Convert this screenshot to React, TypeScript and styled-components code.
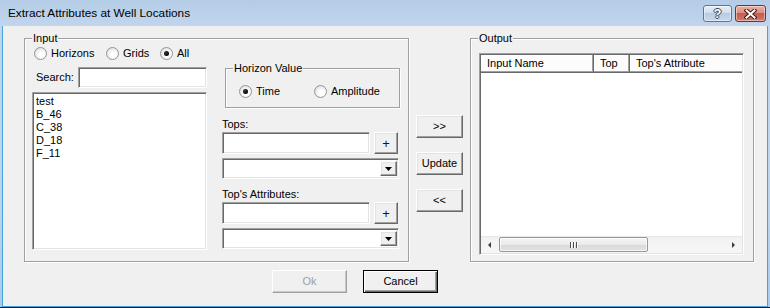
import React from 'react';
import styled, { createGlobalStyle, css } from 'styled-components';

const GlobalStyle = createGlobalStyle`
  html, body { margin: 0; padding: 0; background: #ffffff; }
  body {
    font-family: "Liberation Sans", Arial, sans-serif;
    font-size: 11px;
    color: #000;
  }
  * { box-sizing: border-box; }
`;

const sunken = css`
  border-style: solid;
  border-width: 1px;
  border-color: #a0a0a0 #ffffff #ffffff #a0a0a0;
  box-shadow: inset 1px 1px 0 #696969, inset -1px -1px 0 #e3e3e3;
  background: #ffffff;
`;

const raised = css`
  border-style: solid;
  border-width: 1px;
  border-color: #ffffff #696969 #696969 #ffffff;
  box-shadow: inset -1px -1px 0 #a0a0a0, inset 1px 1px 0 #e3e3e3;
  background: #f0f0f0;
`;

const Window = styled.div`
  width: 770px;
  height: 308px;
  display: flex;
  flex-direction: column;
  background: linear-gradient(#b4cce6, #c1d6ed 26px, #bdd4ec 70%, #a8cbee);
  border-bottom: 1px solid #1b1b1b;
  overflow: hidden;
`;

const TitleBar = styled.div`
  height: 26px;
  flex: none;
  display: flex;
  align-items: flex-start;
  padding: 0 4px 0 8px;
`;

const Title = styled.div`
  font-family: "Liberation Sans", Arial, sans-serif;
  font-size: 11.8px;
  line-height: 26px;
  color: #000;
`;

const Controls = styled.div`
  margin-left: auto;
  margin-top: 5px;
  display: flex;
  gap: 3px;
`;

const CaptionButton = styled.div<{ $close?: boolean }>`
  width: ${(p) => (p.$close ? 31 : 29)}px;
  height: 17px;
  border-radius: 3px;
  display: flex;
  align-items: center;
  justify-content: center;
  border: 1px solid ${(p) => (p.$close ? '#74332c' : '#5f7594')};
  background: ${(p) =>
    p.$close
      ? 'linear-gradient(#eab1a8, #dc8d81 45%, #c85a4d 50%, #d7786a)'
      : 'linear-gradient(#e6eff9, #d0deef 45%, #b7cbe3 50%, #c7d9ee)'};
  box-shadow: inset 0 0 0 1px rgba(255, 255, 255, 0.45);
`;

const HelpGlyph = styled.span`
  font-family: "Liberation Sans", Arial, sans-serif;
  font-weight: bold;
  font-size: 13px;
  line-height: 13px;
  color: #fff;
  text-shadow: 1px 0 #3a4450, -1px 0 #3a4450, 0 1px #3a4450, 0 -1px #3a4450;
`;

const Frame = styled.div`
  flex: 1;
  display: flex;
  padding: 0 2px;
`;

const Client = styled.div`
  flex: 1;
  display: flex;
  flex-direction: column;
  background: #f0f0f0;
  border: 1px solid #46a3d9;
  border-top: none;
  padding: 12px 0 0 21px;
`;

const TopRow = styled.div`
  display: flex;
  align-items: flex-start;
`;

const GroupBox = styled.div<{ $w: number; $h: number }>`
  position: relative;
  flex: none;
  width: ${(p) => p.$w}px;
  height: ${(p) => p.$h}px;
  border: 1px solid #a0a0a0;
  box-shadow: inset 1px 1px 0 #ffffff, 1px 1px 0 #ffffff;
`;

const GroupLabel = styled.span`
  position: absolute;
  top: -7px;
  left: 7px;
  padding: 0 1px;
  line-height: 13px;
  background: #f0f0f0;
`;

const InputBody = styled.div`
  display: flex;
  padding-left: 7px;
`;

const LeftColumn = styled.div`
  width: 175px;
  padding-top: 7px;
  display: flex;
  flex-direction: column;
`;

const RightColumn = styled.div`
  width: 177px;
  margin-left: 15px;
  padding-top: 29px;
  display: flex;
  flex-direction: column;
`;

const RadioRow = styled.div<{ $pad: number }>`
  display: flex;
  align-items: center;
  height: 14px;
  padding-left: ${(p) => p.$pad}px;
`;

const RadioItem = styled.label<{ $w?: number }>`
  display: flex;
  align-items: center;
  gap: 4px;
  line-height: 13px;
  ${(p) => (p.$w ? `width: ${p.$w}px;` : '')}
  flex: none;
`;

const RadioCircle = styled.span<{ $checked?: boolean }>`
  position: relative;
  width: 13px;
  height: 13px;
  flex: none;
  border-radius: 50%;
  border: 1px solid #959595;
  background: radial-gradient(circle at 62% 62%, #ffffff 25%, #ececec 60%, #d2d2d2 100%);
  ${(p) =>
    p.$checked &&
    css`
      &::after {
        content: '';
        position: absolute;
        left: 3px;
        top: 3px;
        width: 5px;
        height: 5px;
        border-radius: 50%;
        background: radial-gradient(circle at 40% 40%, #3a3a3a, #000 70%);
      }
    `}
`;

const SearchRow = styled.div`
  display: flex;
  align-items: center;
  margin-top: 7px;
  height: 21px;
`;

const SearchLabel = styled.span`
  width: 46px;
  padding-left: 4px;
  line-height: 13px;
`;

const TextBox = styled.div<{ $w: number; $h: number }>`
  ${sunken};
  flex: none;
  width: ${(p) => p.$w}px;
  height: ${(p) => p.$h}px;
`;

const ListBox = styled.div`
  ${sunken};
  margin-top: 4px;
  width: 175px;
  height: 158px;
  padding: 2px 0 0 3px;
`;

const ListItem = styled.div`
  line-height: 13px;
`;

const SubGroup = styled.div`
  margin-left: 3px;
`;

const SubBody = styled.div`
  padding: 15px 0 0 13px;
`;

const FieldLabel = styled.div<{ $mt: number }>`
  margin-top: ${(p) => p.$mt}px;
  height: 13px;
  line-height: 13px;
`;

const EntryRow = styled.div`
  display: flex;
  gap: 4px;
  margin-top: 1px;
`;

const SmallButton = styled.div`
  ${raised};
  width: 24px;
  height: 22px;
  display: flex;
  align-items: center;
  justify-content: center;
  font-size: 13px;
  line-height: 13px;
  color: #10163a;
`;

const Combo = styled.div`
  ${sunken};
  margin-top: 4px;
  width: 177px;
  height: 21px;
  display: flex;
  justify-content: flex-end;
  padding: 2px 1px 2px 2px;
`;

const ComboButton = styled.div`
  ${raised};
  width: 17px;
  height: 100%;
  display: flex;
  align-items: center;
  justify-content: center;
`;

const MiddleColumn = styled.div`
  width: 47px;
  margin-left: 7px;
  padding-top: 77px;
  display: flex;
  flex-direction: column;
  gap: 14px;
`;

const PushButton = styled.div<{ $w: number; $default?: boolean; $disabled?: boolean }>`
  ${raised};
  width: ${(p) => p.$w}px;
  height: 23px;
  display: flex;
  align-items: center;
  justify-content: center;
  line-height: 13px;
  color: ${(p) => (p.$disabled ? '#a0a0a0' : '#000')};
  ${(p) =>
    p.$default &&
    css`
      border: 1px solid #000;
      box-shadow: inset 1px 1px 0 #ffffff, inset -1px -1px 0 #696969, inset -2px -2px 0 #a0a0a0;
    `}
  ${(p) =>
    p.$disabled &&
    css`
      border-color: #ffffff #a0a0a0 #a0a0a0 #ffffff;
      box-shadow: inset -1px -1px 0 #c8c8c8;
    `}
`;

const OutputSpacer = styled.div`
  margin-left: 7px;
`;

const ListView = styled.div`
  ${sunken};
  margin: 14px 0 0 8px;
  width: 265px;
  height: 202px;
  padding: 1px;
  display: flex;
  flex-direction: column;
`;

const Header = styled.div`
  display: flex;
  height: 18px;
  flex: none;
  overflow: hidden;
  background: #fcfcfc;
`;

const HeaderCell = styled.div<{ $w: number }>`
  width: ${(p) => p.$w}px;
  flex: none;
  height: 18px;
  padding-left: 6px;
  line-height: 16px;
  border-right: 1px solid #696969;
  border-bottom: 1px solid #696969;
  box-shadow: inset -1px -1px 0 #a0a0a0, inset 1px 1px 0 #ffffff;
  white-space: nowrap;
  overflow: hidden;
`;

const ListBody = styled.div`
  flex: 1;
  background: #ffffff;
`;

const HScroll = styled.div`
  height: 17px;
  flex: none;
  display: flex;
  align-items: center;
  background: linear-gradient(#e6e6e6, #f2f2f2 2px, #f6f6f6);
`;

const ScrollArrow = styled.div<{ $dir: 'left' | 'right' }>`
  width: 17px;
  height: 17px;
  flex: none;
  display: flex;
  align-items: center;
  justify-content: center;
  &::before {
    content: '';
    width: 0;
    height: 0;
    border-top: 3px solid transparent;
    border-bottom: 3px solid transparent;
    ${(p) =>
      p.$dir === 'left'
        ? 'border-right: 3px solid #3c3c3c;'
        : 'border-left: 3px solid #3c3c3c;'}
  }
`;

const Thumb = styled.div`
  width: 149px;
  height: 15px;
  margin-left: 1px;
  border: 1px solid #979797;
  border-radius: 2px;
  background: linear-gradient(#f5f5f5, #ebebeb 50%, #d9d9d9 51%, #e2e2e2);
  box-shadow: inset 0 0 0 1px rgba(255, 255, 255, 0.7);
  display: flex;
  align-items: center;
  justify-content: center;
  gap: 1px;
`;

const GripLine = styled.span`
  width: 1px;
  height: 6px;
  background: #4f4f4f;
  box-shadow: 1px 0 0 #ffffff;
  margin-right: 1px;
`;

const Track = styled.div`
  flex: 1;
`;

const BottomRow = styled.div`
  display: flex;
  gap: 16px;
  margin-top: 8px;
  padding-left: 248px;
`;

const listItems = ['test', 'B_46', 'C_38', 'D_18', 'F_11'];

const CloseIcon = () => (
  <svg width="13" height="10" viewBox="0 0 13 10">
    <path d="M2.5 1.5 L10.5 8.5 M10.5 1.5 L2.5 8.5" stroke="#3b1a17" strokeWidth="4" strokeLinecap="square" />
    <path d="M2.5 1.5 L10.5 8.5 M10.5 1.5 L2.5 8.5" stroke="#ffffff" strokeWidth="2" strokeLinecap="square" />
  </svg>
);

const DropArrow = () => (
  <svg width="7" height="4" viewBox="0 0 7 4">
    <polygon points="0,0 7,0 3.5,4" fill="#000" />
  </svg>
);

export default function App() {
  return (
    <>
      <GlobalStyle />
      <Window>
        <TitleBar>
          <Title>Extract Attributes at Well Locations</Title>
          <Controls>
            <CaptionButton>
              <HelpGlyph>?</HelpGlyph>
            </CaptionButton>
            <CaptionButton $close>
              <CloseIcon />
            </CaptionButton>
          </Controls>
        </TitleBar>
        <Frame>
          <Client>
            <TopRow>
              <GroupBox $w={385} $h={224}>
                <GroupLabel>Input</GroupLabel>
                <InputBody>
                  <LeftColumn>
                    <RadioRow $pad={2}>
                      <RadioItem $w={72}>
                        <RadioCircle />
                        Horizons
                      </RadioItem>
                      <RadioItem $w={54}>
                        <RadioCircle />
                        Grids
                      </RadioItem>
                      <RadioItem>
                        <RadioCircle $checked />
                        All
                      </RadioItem>
                    </RadioRow>
                    <SearchRow>
                      <SearchLabel>Search:</SearchLabel>
                      <TextBox $w={129} $h={21} />
                    </SearchRow>
                    <ListBox>
                      {listItems.map((it) => (
                        <ListItem key={it}>{it}</ListItem>
                      ))}
                    </ListBox>
                  </LeftColumn>
                  <RightColumn>
                    <SubGroup>
                      <GroupBox $w={175} $h={40}>
                        <GroupLabel>Horizon Value</GroupLabel>
                        <SubBody>
                          <RadioRow $pad={0}>
                            <RadioItem $w={75}>
                              <RadioCircle $checked />
                              Time
                            </RadioItem>
                            <RadioItem>
                              <RadioCircle />
                              Amplitude
                            </RadioItem>
                          </RadioRow>
                        </SubBody>
                      </GroupBox>
                    </SubGroup>
                    <FieldLabel $mt={10}>Tops:</FieldLabel>
                    <EntryRow>
                      <TextBox $w={148} $h={22} />
                      <SmallButton>+</SmallButton>
                    </EntryRow>
                    <Combo>
                      <ComboButton>
                        <DropArrow />
                      </ComboButton>
                    </Combo>
                    <FieldLabel $mt={9}>Top's Attributes:</FieldLabel>
                    <EntryRow>
                      <TextBox $w={148} $h={22} />
                      <SmallButton>+</SmallButton>
                    </EntryRow>
                    <Combo>
                      <ComboButton>
                        <DropArrow />
                      </ComboButton>
                    </Combo>
                  </RightColumn>
                </InputBody>
              </GroupBox>
              <MiddleColumn>
                <PushButton $w={47}>&gt;&gt;</PushButton>
                <PushButton $w={47}>Update</PushButton>
                <PushButton $w={47}>&lt;&lt;</PushButton>
              </MiddleColumn>
              <OutputSpacer>
                <GroupBox $w={284} $h={224}>
                  <GroupLabel>Output</GroupLabel>
                  <ListView>
                    <Header>
                      <HeaderCell $w={113}>Input Name</HeaderCell>
                      <HeaderCell $w={36}>Top</HeaderCell>
                      <HeaderCell $w={150}>Top's Attribute</HeaderCell>
                    </Header>
                    <ListBody />
                    <HScroll>
                      <ScrollArrow $dir="left" />
                      <Thumb>
                        <GripLine />
                        <GripLine />
                        <GripLine />
                      </Thumb>
                      <Track />
                      <ScrollArrow $dir="right" />
                    </HScroll>
                  </ListView>
                </GroupBox>
              </OutputSpacer>
            </TopRow>
            <BottomRow>
              <PushButton $w={75} $disabled>Ok</PushButton>
              <PushButton $w={75} $default>Cancel</PushButton>
            </BottomRow>
          </Client>
        </Frame>
      </Window>
    </>
  );
}
